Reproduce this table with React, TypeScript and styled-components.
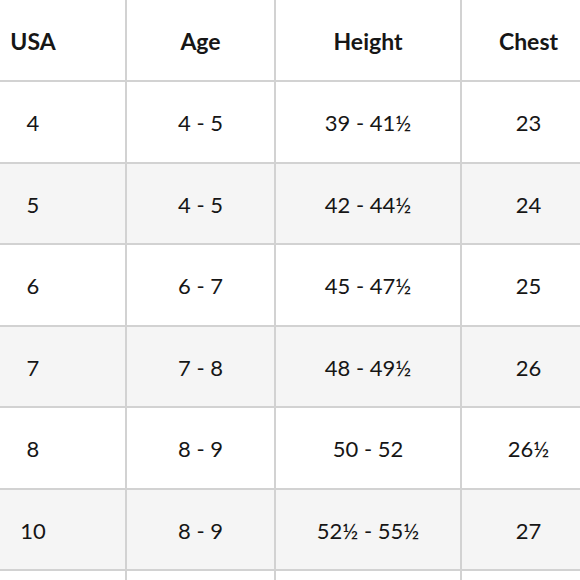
import React from "react";
import styled, { createGlobalStyle } from "styled-components";

const Global = createGlobalStyle`
  html, body { margin: 0; padding: 0; background: #ffffff; }
  body { font-family: Lato, "Open Sans", "Liberation Sans", sans-serif; }
`;

const Viewport = styled.div`
  width: 580px;
  height: 580px;
  overflow: hidden;
  background: #ffffff;
`;

const Table = styled.div`
  margin-left: -59px;
  width: 654px;
  display: flex;
  flex-direction: column;
`;

const Row = styled.div<{ $shade?: boolean; $head?: boolean }>`
  display: grid;
  grid-template-columns: 186px 149px 186px 133px;
  height: ${(p) => (p.$head ? "80px" : "79.5px")};
  border-bottom: 2px solid #d2d2d2;
  background: ${(p) => (p.$shade ? "#f5f5f5" : "#ffffff")};
`;

const Cell = styled.div<{ $head?: boolean }>`
  display: flex;
  align-items: center;
  justify-content: center;
  border-right: 2px solid #d2d2d2;
  color: #161616;
  font-size: ${(p) => (p.$head ? "23px" : "22px")};
  font-weight: ${(p) => (p.$head ? 700 : 400)};
  padding-top: 2px;
  box-sizing: border-box;
  &:last-child { border-right: none; }
`;

const head = ["USA", "Age", "Height", "Chest"];
const rows = [
  ["4", "4 - 5", "39 - 41½", "23"],
  ["5", "4 - 5", "42 - 44½", "24"],
  ["6", "6 - 7", "45 - 47½", "25"],
  ["7", "7 - 8", "48 - 49½", "26"],
  ["8", "8 - 9", "50 - 52", "26½"],
  ["10", "8 - 9", "52½ - 55½", "27"],
  ["", "", "", ""],
];

export default function App() {
  return (
    <>
      <Global />
      <Viewport>
        <Table>
          <Row $head>
            {head.map((h) => (
              <Cell key={h} $head>{h}</Cell>
            ))}
          </Row>
          {rows.map((r, i) => (
            <Row key={i} $shade={i % 2 === 1}>
              {r.map((c, j) => (
                <Cell key={j}>{c}</Cell>
              ))}
            </Row>
          ))}
        </Table>
      </Viewport>
    </>
  );
}
